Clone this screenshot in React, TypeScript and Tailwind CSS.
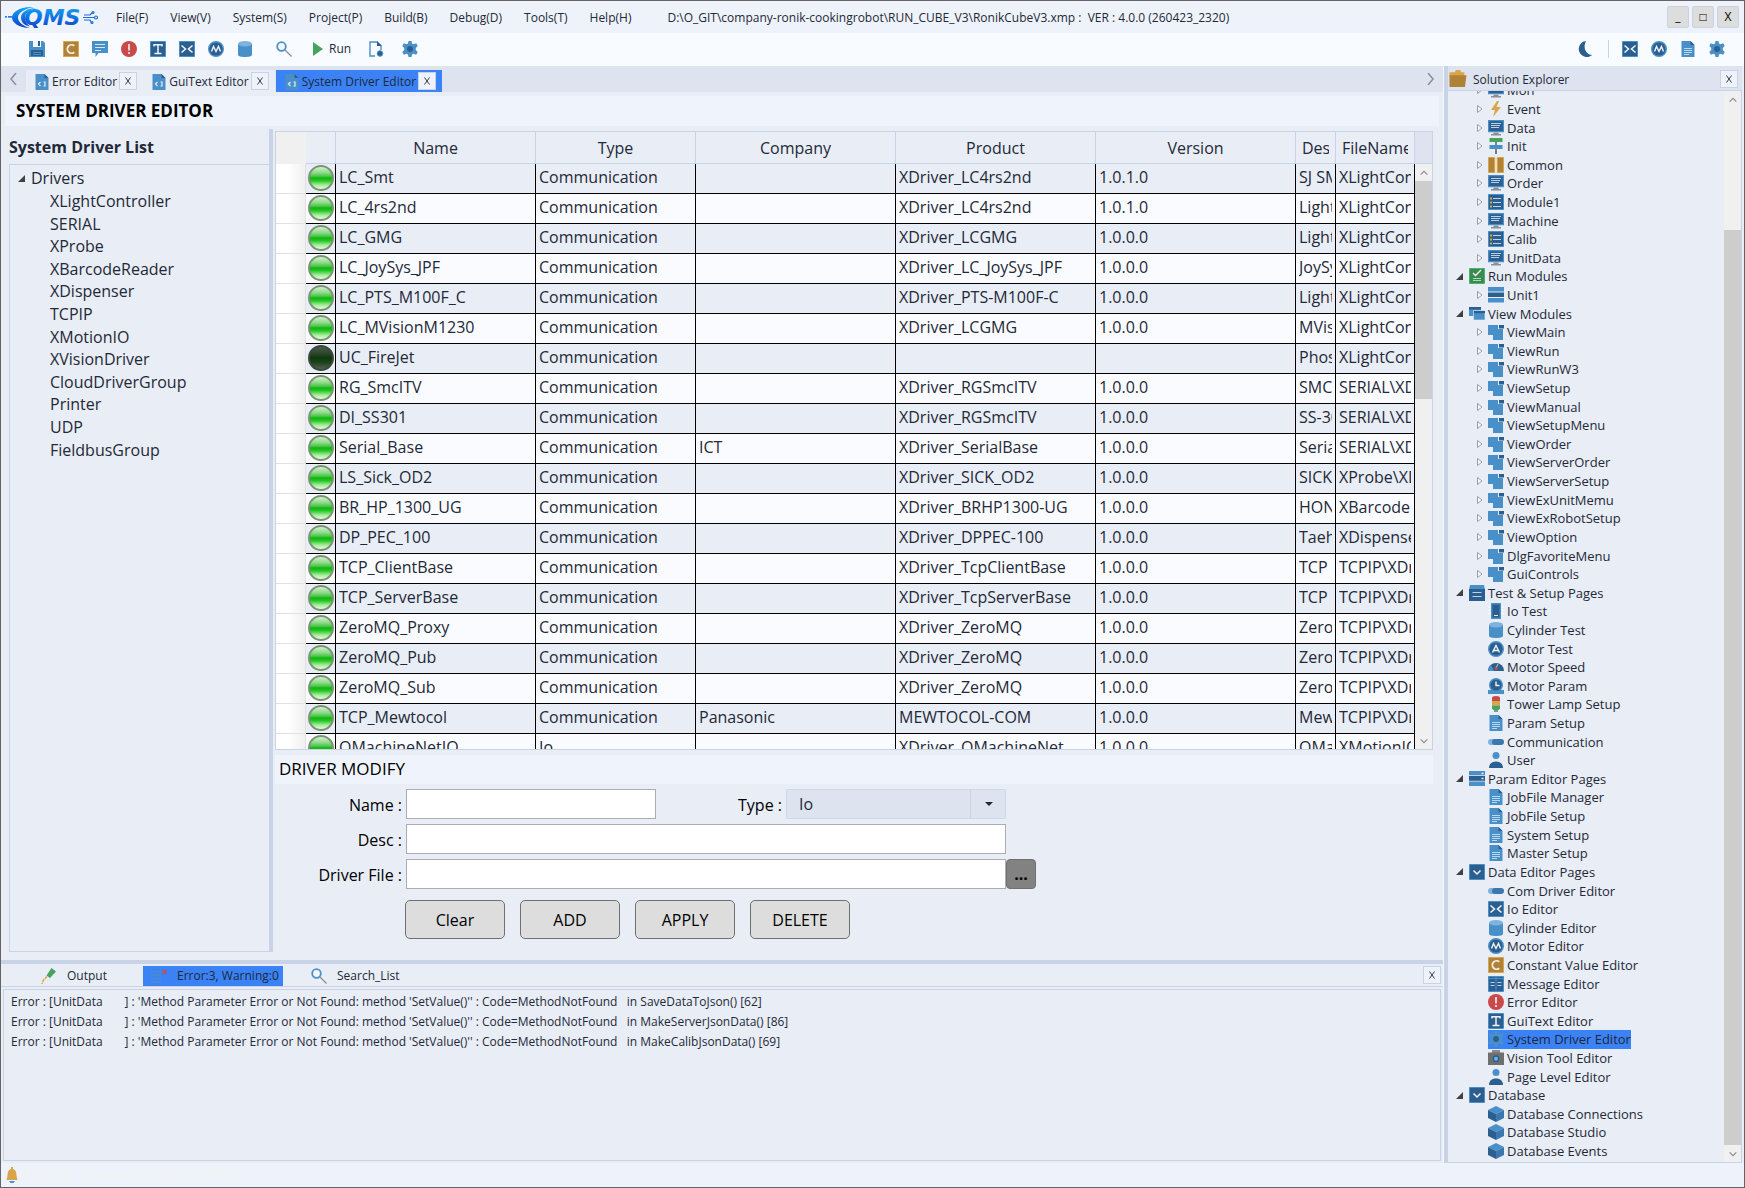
import clsx from "clsx";
import type { ReactNode } from "react";

const BLUE = "#4a90c8";
const NAVY = "#2c5f8f";
const GOLD = "#d9a54a";
const BROWN = "#b08238";
const PALE = "#e8edf6";

const icons = {
  save: (
    <>
      <path fill={BLUE} d="M0 0h14l2 2v14H0z" />
      <path fill="#f4f8fd" d="M4 0h8v6H4z" />
      <path fill={NAVY} d="M9 0h2v5H9zM2 9h12v6H2z" />
      <path stroke={BLUE} d="M4 11.5h8M4 13.5h8" />
    </>
  ),
  constant: (
    <>
      <path fill={BROWN} stroke={GOLD} d="M.5.5h15v15H.5z" />
      <path
        fill="none"
        stroke="#f4f0e8"
        strokeWidth="1.8"
        d="M11.3 4.8A4.2 4.2 0 1 0 11.3 11.2"
      />
    </>
  ),
  message: (
    <>
      <path fill={BLUE} d="M0 0h16v12H6.500l-3 4v-4H0z" />
      <path stroke="#d6e6f4" d="M3 3.500h10M3 6.500h10M3 9.500h6" />
    </>
  ),
  error: (
    <>
      <circle cx="8" cy="8" r="8" fill="#c94a4a" />
      <path stroke="#f3dede" strokeWidth="1.8" d="M8 3v6.500M8 11v2" />
    </>
  ),
  text: (
    <>
      <path fill={NAVY} stroke={BLUE} d="M.5.5h15v15H.5z" />
      <path
        fill="none"
        stroke="#f0f4fa"
        strokeWidth="1.5"
        d="M4 5.500V3.800h8v1.700M8 3.800v8.500M4.500 12.500h7"
      />
    </>
  ),
  io: (
    <>
      <path fill={NAVY} stroke={BLUE} d="M.5.5h15v15H.5z" />
      <path
        fill="none"
        stroke="#f0f4fa"
        strokeWidth="1.5"
        d="M2.500 4.500 6.500 8l-4 3.500M13.500 4.500 9.500 8l4 3.500"
      />
    </>
  ),
  motor: (
    <>
      <circle cx="8" cy="8" r="7.300" fill={NAVY} stroke={BLUE} strokeWidth="1.4" />
      <path
        fill="none"
        stroke="#f0f4fa"
        strokeWidth="1.4"
        d="M3.500 10.500 5.500 5.500 8 10.500 10.500 5.500 12.500 10.500"
      />
    </>
  ),
  cylinder: (
    <>
      <path fill={BLUE} d="M1 3v11c0 1 3 2 7 2s7-1 7-2V3z" />
      <ellipse cx="8" cy="2.800" rx="7" ry="2.800" fill="#7fb2df" />
    </>
  ),
  search: (
    <>
      <circle cx="5.500" cy="5.500" r="4.300" fill="#f4f8fd" stroke={BLUE} strokeWidth="1.8" />
      <path stroke="#8a8f96" strokeWidth="1.3" d="m9 9 6.500 6.500" />
    </>
  ),
  run: <path fill="#45a35c" d="M3 1 13 8 3 15z" />,
  docGear: (
    <>
      <path fill="none" stroke={BLUE} strokeWidth="1.4" d="M7 15H2V1h7l4 4v4" />
      <path fill={NAVY} d="M9 0v5h5z" />
      <circle cx="12" cy="12.500" r="2.800" fill={NAVY} stroke={BLUE} />
    </>
  ),
  gear: (
    <>
      <path
        fill={BLUE}
        d="M6.500 0h3l.5 2.500 1.500.8 2.700-1 1.500 2.700L13.800 7v2l1.900 2-1.500 2.700-2.700-1-1.500.8-.5 2.500h-3L6 13.500l-1.500-.8-2.700 1L.3 11l1.900-2V7L.3 5l1.500-2.700 2.700 1L6 2.500z"
      />
      <circle cx="8" cy="8" r="3" fill={NAVY} />
    </>
  ),
  moon: (
    <>
      <path fill={BLUE} d="M7 0a8 8 0 1 0 8 14.500C8 15 4 8 7 0z" />
      <path fill={NAVY} d="M9 0a8 8 0 1 0 6 14C9 13.500 5.500 7 9 0z" />
    </>
  ),
  doc: (
    <>
      <path fill={BLUE} d="M1.500 0h9L14.500 4v12h-13z" />
      <path fill={NAVY} d="M10.500 0v4h4z" />
      <path stroke="#bcd6ee" d="M4 7.500h8M4 9.500h8M4 11.500h8M4 13.500h5" />
    </>
  ),
  codeDoc: (
    <>
      <path fill={BLUE} d="M1.500 0h9L14.500 4v12h-13z" />
      <path fill={NAVY} d="M10.500 0v4h4z" />
      <path
        fill="none"
        stroke="#e4eef8"
        strokeWidth="1.2"
        d="M6.500 8 4.500 10l2 2M9.500 8h1.500v4H9.500"
      />
    </>
  ),
  folder: (
    <>
      <path fill={GOLD} d="M0 2h5l1-2h4l1 2h3v5H0z" />
      <path fill={BROWN} d="M0 5h16l-1.500 11H0z" />
    </>
  ),
  monitor: (
    <>
      <path fill={NAVY} stroke={BLUE} strokeWidth="1.2" d="M.6.600h14.800v11H.6z" />
      <path stroke="#b9d2ea" d="M3 3.500h10M3 5.500h9M3 7.500h8" />
      <path fill="#8a8f96" d="M5.500 12.500h5V14h-5zM3 14h10v1.500H3z" />
    </>
  ),
  bolt: <path fill={GOLD} d="M9 0 3 9h4l-2 7 8-10H8.500L11 0z" />,
  init: (
    <>
      <path fill="#7b8086" d="M7 4h2v12H7z" />
      <path fill="#45a35c" d="M1.500 0h13v4h-13z" />
      <path fill={BLUE} d="M1.500 7h13v4h-13z" />
    </>
  ),
  common: (
    <>
      <path fill={BROWN} stroke={GOLD} d="M.5.500h6.200v15H.5zM9.300.500h6.200v15H9.300z" />
      <path fill={GOLD} d="M6 4h4v8H6z" />
      <path fill="#f1dfb9" d="M7 4h2v8H7z" />
    </>
  ),
  module: (
    <>
      <path fill={NAVY} stroke={BLUE} d="M.5.5h15v15H.5z" />
      <path stroke="#b9d2ea" d="M5 4.500h8M5 8.500h8M5 12.500h8" />
      <path stroke={GOLD} strokeWidth="2" d="M2 4.500h2M2 8.500h2M2 12.500h2" />
    </>
  ),
  runModules: (
    <>
      <path fill="#3b8a50" stroke="#4db068" d="M.5.5h15v15H.5z" />
      <path fill="none" stroke="#f0f7f2" strokeWidth="1.4" d="m4 5 2.500 2.500L12 2" />
      <path stroke="#a9d6b6" d="M4 10.500h8M4 12.500h8" />
    </>
  ),
  unit: (
    <>
      <path fill={BLUE} d="M0 0h16v4.500H0zM0 11h16v4.500H0z" />
      <path fill={NAVY} d="M0 5.500h16v4.500H0z" />
    </>
  ),
  viewModules: (
    <>
      <path fill={BLUE} d="M0 1h12v9H0z" />
      <path fill={NAVY} d="M0 1h12v2.500H0z" />
      <path fill={BLUE} stroke={PALE} strokeWidth=".6" d="M4.500 4.500H16V14H4.500z" />
      <path fill={NAVY} d="M5 5h11v2.200H5z" />
    </>
  ),
  view: (
    <>
      <path fill={BLUE} d="M0 1h10v4h5v11H5v-5H0z" />
      <path fill={NAVY} d="M11 1h5v3.500h-5z" />
    </>
  ),
  testPages: (
    <>
      <path fill={BLUE} d="M1 0h14l1 5H0z" />
      <path fill={NAVY} d="M0 4h16v12H0z" />
      <path stroke="#b9d2ea" d="M3.500 7.500h9M3.500 11.500h9" />
    </>
  ),
  ioTest: (
    <>
      <path stroke="#f7fafd" d="M0 4.500h16M0 7.500h16M0 10.500h16" />
      <path fill={NAVY} stroke={BLUE} strokeWidth="1.4" d="M3.700.700h8.600v14.600H3.700z" />
      <path stroke="#dbe7f3" d="M6 12.500h4" />
    </>
  ),
  motorTest: (
    <>
      <circle cx="8" cy="8" r="7.300" fill={NAVY} stroke={BLUE} strokeWidth="1.4" />
      <path fill="none" stroke="#f0f4fa" strokeWidth="1.4" d="M4.500 11.500 8 4.500l3.500 7M6 9.500h4" />
    </>
  ),
  speed: (
    <>
      <path fill={NAVY} d="M0 12a8 8 0 0 1 16 0z" />
      <path fill={BLUE} d="M0 12a8 8 0 0 1 3-6l3 6z" />
      <path stroke="#e8c0c0" d="m8 9 2-4" />
      <circle cx="8" cy="9.500" r="1.500" fill="#c94a4a" />
    </>
  ),
  motorParam: (
    <>
      <path fill={BLUE} d="M0 12h16v4H0z" />
      <circle cx="8" cy="7" r="6.300" fill={NAVY} stroke={BLUE} strokeWidth="1.4" />
      <path fill="none" stroke="#f0f4fa" strokeWidth="1.4" d="M8 3.500V7.500h3.500" />
    </>
  ),
  lamp: (
    <>
      <path fill="#c94a4a" d="M4 2q0-2 4-2t4 2v3H4z" />
      <path fill={GOLD} d="M4 5h8v4.500H4z" />
      <path fill="#45a35c" d="M4 9.500h8v3L10.500 14h-5L4 12.500z" />
      <path fill="#8a8f96" d="M6 14h4v2H6z" />
    </>
  ),
  comm: (
    <>
      <rect x="0" y="5" width="12" height="6" rx="3" fill="#7fb2df" />
      <rect x="4" y="5" width="12" height="6" rx="3" fill="#3c78b0" />
    </>
  ),
  user: (
    <>
      <circle cx="8" cy="3.500" r="3.500" fill={BLUE} />
      <path fill={NAVY} d="M1 16c0-4 2.500-6.500 7-6.500s7 2.500 7 6.500z" />
    </>
  ),
  paramPages: (
    <>
      <path fill={BLUE} d="M0 0h16v4H0zM0 10.500h16V15H0z" />
      <path fill={NAVY} d="M0 4.800h16v5H0z" />
      <path stroke="#f0f4fa" strokeWidth="1.300" d="M12.500 2.500h2M12.500 7.500h2" />
    </>
  ),
  dataPages: (
    <>
      <path fill={NAVY} stroke={BLUE} d="M.5.5h15v15H.5z" />
      <path fill="none" stroke="#f0f4fa" strokeWidth="1.500" d="M4.500 6.500 8 10l3.500-3.500" />
    </>
  ),
  messageTable: (
    <>
      <path fill={NAVY} stroke={BLUE} d="M.5.500h15v15H.5z" />
      <path stroke={BLUE} d="M8 .5v15M.5 2.500h15" />
      <path stroke="#b9d2ea" d="M2.500 6.500h4M9.500 6.500h4M2.500 9.500h4M9.500 9.500h4" />
    </>
  ),
  camera: (
    <>
      <path fill="#8a8a8a" d="M4 0h8v3H4z" />
      <path fill="#6f6f6f" d="M0 2.500h16V15H0z" />
      <circle cx="8" cy="8.800" r="3.500" fill={NAVY} />
      <circle cx="8" cy="8.800" r="2" fill="#6fb0e8" />
    </>
  ),
  cube: (
    <>
      <path fill={BLUE} d="m8 0 8 4-8 4-8-4z" />
      <path fill={NAVY} d="m0 4 8 4v8l-8-4z" />
      <path fill="#3c78b0" d="m16 4-8 4v8l8-4z" />
    </>
  ),
  output: (
    <>
      <path fill="#45a35c" d="m10.500 0 4.500 3.500L9 10 5.500 7.500z" />
      <path fill="none" stroke={GOLD} strokeWidth="1.500" strokeDasharray="3 1" d="M6 8.500 2.500 12 1 16" />
    </>
  ),
  errorList: (
    <>
      <path stroke={BLUE} strokeOpacity=".7" strokeWidth="1.800" d="M0 3.500h10M0 7h10M0 10.500h10M0 14h10" />
      <path stroke="#c94a4a" strokeWidth="1.300" d="m11.500 2 4 4m0-4-4 4" />
    </>
  ),
  bell: (
    <>
      <path fill={GOLD} d="M7 0h2v2c3 1 3.500 4 3.500 7l1 4h-11l1-4c0-3 .5-6 3.500-7z" />
      <path fill={BLUE} d="M5 14h6l-1.500 2h-3z" />
    </>
  ),
} satisfies Record<string, ReactNode>;

type IconName = keyof typeof icons;

function Icon({ name, className }: { name: IconName; className?: string }) {
  return (
    <svg viewBox="0 0 16 16" aria-hidden className={clsx("shrink-0", className ?? "size-4")}>
      {icons[name]}
    </svg>
  );
}

const MENU = [
  "File(F)",
  "View(V)",
  "System(S)",
  "Project(P)",
  "Build(B)",
  "Debug(D)",
  "Tools(T)",
  "Help(H)",
];

const TOOLS: IconName[] = [
  "constant",
  "message",
  "error",
  "text",
  "io",
  "motor",
  "cylinder",
];

const DRIVERS = [
  "XLightController",
  "SERIAL",
  "XProbe",
  "XBarcodeReader",
  "XDispenser",
  "TCPIP",
  "XMotionIO",
  "XVisionDriver",
  "CloudDriverGroup",
  "Printer",
  "UDP",
  "FieldbusGroup",
];

// name, type, company, product, version, description, file name
const ROWS = [
  ["LC_Smt", "Communication", "", "XDriver_LC4rs2nd", "1.0.1.0", "SJ SMT", "XLightController"],
  ["LC_4rs2nd", "Communication", "", "XDriver_LC4rs2nd", "1.0.1.0", "Light", "XLightController"],
  ["LC_GMG", "Communication", "", "XDriver_LCGMG", "1.0.0.0", "Light", "XLightController"],
  ["LC_JoySys_JPF", "Communication", "", "XDriver_LC_JoySys_JPF", "1.0.0.0", "JoySys", "XLightController"],
  ["LC_PTS_M100F_C", "Communication", "", "XDriver_PTS-M100F-C", "1.0.0.0", "Light", "XLightController"],
  ["LC_MVisionM1230", "Communication", "", "XDriver_LCGMG", "1.0.0.0", "MVision", "XLightController"],
  ["UC_FireJet", "Communication", "", "", "", "Phos", "XLightController"],
  ["RG_SmcITV", "Communication", "", "XDriver_RGSmcITV", "1.0.0.0", "SMC", "SERIAL\\XDriver"],
  ["DI_SS301", "Communication", "", "XDriver_RGSmcITV", "1.0.0.0", "SS-301", "SERIAL\\XDriver"],
  ["Serial_Base", "Communication", "ICT", "XDriver_SerialBase", "1.0.0.0", "Serial", "SERIAL\\XDriver"],
  ["LS_Sick_OD2", "Communication", "", "XDriver_SICK_OD2", "1.0.0.0", "SICK", "XProbe\\XDriver"],
  ["BR_HP_1300_UG", "Communication", "", "XDriver_BRHP1300-UG", "1.0.0.0", "HON", "XBarcodeReader"],
  ["DP_PEC_100", "Communication", "", "XDriver_DPPEC-100", "1.0.0.0", "Taeh", "XDispenser"],
  ["TCP_ClientBase", "Communication", "", "XDriver_TcpClientBase", "1.0.0.0", "TCP", "TCPIP\\XDriver"],
  ["TCP_ServerBase", "Communication", "", "XDriver_TcpServerBase", "1.0.0.0", "TCP", "TCPIP\\XDriver"],
  ["ZeroMQ_Proxy", "Communication", "", "XDriver_ZeroMQ", "1.0.0.0", "Zero", "TCPIP\\XDriver"],
  ["ZeroMQ_Pub", "Communication", "", "XDriver_ZeroMQ", "1.0.0.0", "Zero", "TCPIP\\XDriver"],
  ["ZeroMQ_Sub", "Communication", "", "XDriver_ZeroMQ", "1.0.0.0", "Zero", "TCPIP\\XDriver"],
  ["TCP_Mewtocol", "Communication", "Panasonic", "MEWTOCOL-COM", "1.0.0.0", "Mew", "TCPIP\\XDriver"],
  ["QMachineNetIO", "Io", "", "XDriver_QMachineNet", "1.0.0.0", "QMac", "XMotionIO"],
];

type Node = { icon: IconName; label: string; kind: "group" | "branch" | "leaf" };

const group = (icon: IconName, label: string): Node => ({ icon, label, kind: "group" });
const branch = (icon: IconName, label: string): Node => ({ icon, label, kind: "branch" });
const leaf = (icon: IconName, label: string): Node => ({ icon, label, kind: "leaf" });

const SOLUTION: Node[] = [
  branch("monitor", "Mon"),
  branch("bolt", "Event"),
  branch("monitor", "Data"),
  branch("init", "Init"),
  branch("common", "Common"),
  branch("monitor", "Order"),
  branch("module", "Module1"),
  branch("monitor", "Machine"),
  branch("module", "Calib"),
  branch("monitor", "UnitData"),
  group("runModules", "Run Modules"),
  branch("unit", "Unit1"),
  group("viewModules", "View Modules"),
  branch("view", "ViewMain"),
  branch("view", "ViewRun"),
  branch("view", "ViewRunW3"),
  branch("view", "ViewSetup"),
  branch("view", "ViewManual"),
  branch("view", "ViewSetupMenu"),
  branch("view", "ViewOrder"),
  branch("view", "ViewServerOrder"),
  branch("view", "ViewServerSetup"),
  branch("view", "ViewExUnitMemu"),
  branch("view", "ViewExRobotSetup"),
  branch("view", "ViewOption"),
  branch("view", "DlgFavoriteMenu"),
  branch("view", "GuiControls"),
  group("testPages", "Test & Setup Pages"),
  leaf("ioTest", "Io Test"),
  leaf("cylinder", "Cylinder Test"),
  leaf("motorTest", "Motor Test"),
  leaf("speed", "Motor Speed"),
  leaf("motorParam", "Motor Param"),
  leaf("lamp", "Tower Lamp Setup"),
  leaf("doc", "Param Setup"),
  leaf("comm", "Communication"),
  leaf("user", "User"),
  group("paramPages", "Param Editor Pages"),
  leaf("doc", "JobFile Manager"),
  leaf("doc", "JobFile Setup"),
  leaf("doc", "System Setup"),
  leaf("doc", "Master Setup"),
  group("dataPages", "Data Editor Pages"),
  leaf("comm", "Com Driver Editor"),
  leaf("io", "Io Editor"),
  leaf("cylinder", "Cylinder Editor"),
  leaf("motor", "Motor Editor"),
  leaf("constant", "Constant Value Editor"),
  leaf("messageTable", "Message Editor"),
  leaf("error", "Error Editor"),
  leaf("text", "GuiText Editor"),
  leaf("gear", "System Driver Editor"),
  leaf("camera", "Vision Tool Editor"),
  leaf("user", "Page Level Editor"),
  group("dataPages", "Database"),
  leaf("cube", "Database Connections"),
  leaf("cube", "Database Studio"),
  leaf("cube", "Database Events"),
];

const LOGS = [
  "in SaveDataToJson() [62]",
  "in MakeServerJsonData() [86]",
  "in MakeCalibJsonData() [69]",
];

export default function App() {
  return (
    <div className="flex h-screen flex-col overflow-hidden border border-[#646464] bg-[#e8edf6] font-['Open_Sans','Noto_Sans',sans-serif] text-xs text-[#1f2937]">
      <MenuBar />
      <Toolbar />
      <div className="flex min-h-0 flex-1">
        <div className="flex min-w-0 flex-1 flex-col border-r border-[#f4f7fc]">
          <EditorTabs />
          <SystemDriverEditor />
          <OutputPanel />
        </div>
        <SolutionExplorer />
      </div>
      <footer className="flex h-6 shrink-0 items-center gap-1 bg-[#eef3fb] pl-[3px]">
        <Icon name="bell" />
        <span className="text-[#f2f2f2]">LICENSE : License[ICT-2235-XXX-M99]</span>
      </footer>
    </div>
  );
}

function Logo() {
  return (
    <svg viewBox="0 0 96 24" className="h-6 w-24 shrink-0" role="img" aria-label="QMS">
      <defs>
        <linearGradient id="logo" x1="0" y1="0" x2="0" y2="1">
          <stop offset="0" stopColor="#12a8f5" />
          <stop offset="0.600" stopColor="#1268e0" />
          <stop offset="1" stopColor="#0a3fc0" />
        </linearGradient>
      </defs>
      <g fill="url(#logo)">
        <path d="M29 2C15 1 7 7 7 12.500s7 10 18 10.500c-7-2-12-6-12-10.500S19 4 29 2z" />
        <path d="M31 3c-8 0-15 4-15 9.500s4 8 9 9c-3-2-5-5-5-9s4-8 11-9.500z" />
        <path d="M0 11h2v1.500H0zM3 11h4v1.500H3z" />
        <text
          x="19"
          y="20"
          fontFamily="DejaVu Sans, sans-serif"
          fontSize="22"
          fontWeight="bold"
          fontStyle="italic"
        >
          QMS
        </text>
      </g>
      <g fill="none" stroke="#1a6be0" strokeWidth="1.200">
        <path d="M79 10h6l2-2M78 12.500h11M79 15h6l1 2" />
        <circle cx="91" cy="12.500" r="1.500" />
        <circle cx="88" cy="7.500" r="1" />
        <circle cx="87" cy="17.500" r="1" />
      </g>
    </svg>
  );
}

function MenuBar() {
  return (
    <header className="flex h-8 shrink-0 items-center bg-[#eef3fb] pr-[5px] pl-1">
      <Logo />
      <nav className="flex gap-[22px] pt-0.5 pl-[15px] whitespace-nowrap">
        {MENU.map((item) => (
          <button key={item}>{item}</button>
        ))}
      </nav>
      <div className="flex-1 truncate pt-0.5 pl-9">
        D:\O_GIT\company-ronik-cookingrobot\RUN_CUBE_V3\RonikCubeV3.xmp :&nbsp; VER : 4.0.0
        (260423_2320)
      </div>
      <div className="flex gap-[3px]">
        {["_", "□", "X"].map((label) => (
          <button
            key={label}
            className="size-[22px] rounded-xs border border-[#c8d3e6] bg-[#dddddd] leading-4 text-black"
          >
            {label}
          </button>
        ))}
      </div>
    </header>
  );
}

function Toolbar() {
  return (
    <div className="flex h-[33px] shrink-0 items-center bg-[#f8fbff] pr-[19px] pb-px pl-7">
      <button aria-label="Save">
        <Icon name="save" />
      </button>
      <div className="flex gap-[13px] pl-[18px]">
        {TOOLS.map((name) => (
          <button key={name} aria-label={name}>
            <Icon name={name} />
          </button>
        ))}
      </div>
      <button aria-label="Search" className="pl-[23px]">
        <Icon name="search" />
      </button>
      <button className="flex items-center gap-[3px] pl-[18px]">
        <Icon name="run" />
        Run
      </button>
      <button aria-label="New document" className="pl-[17px]">
        <Icon name="docGear" />
      </button>
      <button aria-label="Settings" className="pl-[18px]">
        <Icon name="gear" />
      </button>
      <div className="ml-auto flex items-center gap-[13px]">
        <Icon name="moon" className="mr-0.5 size-4" />
        <div className="h-[18px] w-px bg-[#cbd3e0]" />
        <Icon name="io" />
        <Icon name="motor" />
        <Icon name="doc" />
        <Icon name="gear" />
      </div>
    </div>
  );
}

function Chevron({ d, className }: { d: string; className?: string }) {
  return (
    <svg viewBox="0 0 12 12" aria-hidden className={clsx("shrink-0", className ?? "size-3")}>
      <path d={d} fill="none" stroke="#8a8f96" strokeWidth="1.500" />
    </svg>
  );
}

function CloseButton({ className }: { className?: string }) {
  return (
    <button
      aria-label="Close"
      className={clsx(
        "flex size-[18px] shrink-0 items-center justify-center border border-[#c8d3e6] bg-[#eef3fb]",
        className,
      )}
    >
      <svg viewBox="0 0 8 8" className="size-2">
        <path d="m1.500.5 5 7m0-7-5 7" stroke="#333b47" />
      </svg>
    </button>
  );
}

function EditorTabs() {
  return (
    <div className="flex h-[26px] shrink-0 items-end bg-[#dde4f0]">
      <button aria-label="Previous tab" className="flex w-[25px] justify-center self-center">
        <Chevron d="M8 0 3 6l5 6" />
      </button>
      {["Error Editor", "GuiText Editor", "System Driver Editor"].map((tab, i) => (
        <div
          key={tab}
          className={clsx(
            "flex h-[22px] items-center pr-1.5 pl-2",
            i === 2 ? "ml-px bg-[#3b82f6]" : "bg-[#e8edf6]",
          )}
        >
          <button className="flex items-center gap-0.5 pt-px whitespace-nowrap">
            <Icon name="codeDoc" />
            {tab}
          </button>
          <CloseButton className="ml-0.5" />
        </div>
      ))}
      <button aria-label="Next tab" className="mr-[7px] ml-auto self-center">
        <Chevron d="M4 0l5 6-5 6" />
      </button>
    </div>
  );
}

function SystemDriverEditor() {
  return (
    <main className="flex min-h-0 flex-1 flex-col px-1 pt-1 pb-2 text-base">
      <h1 className="h-[30px] shrink-0 bg-[#eff4fc] pl-[11px] text-[17px] leading-[30px] font-bold text-black">
        SYSTEM DRIVER EDITOR
      </h1>
      <div className="flex min-h-0 flex-1 pt-[3px]">
        <section className="flex w-[268px] shrink-0 flex-col border-r-4 border-[#c8d3e6] pl-1">
          <h2 className="h-[35px] shrink-0 leading-9 font-bold">System Driver List</h2>
          <DriverTree />
        </section>
        <section className="flex min-w-0 flex-1 flex-col pr-1.5 pl-0.5">
          <DriverTable />
          <DriverForm />
        </section>
      </div>
    </main>
  );
}

function DriverTree() {
  return (
    <div className="flex-1 border border-r-0 border-[#c8d3e6] px-2 pt-0.5">
      <ul className="grid h-[294px] auto-rows-fr items-center">
        <li className="flex items-center gap-1.5">
          <OpenMark />
          Drivers
        </li>
        {DRIVERS.map((driver) => (
          <li key={driver} className="pl-8">
            {driver}
          </li>
        ))}
      </ul>
    </div>
  );
}

function OpenMark() {
  return (
    <svg viewBox="0 0 7 7" aria-hidden className="size-[7px] shrink-0">
      <path d="M7 0v7H0z" fill="#404040" />
    </svg>
  );
}

const HEADINGS = ["Name", "Type", "Company", "Product", "Version", "Des", "FileName"];

function DriverTable() {
  return (
    <div className="mt-0.5 flex min-h-0 flex-1 border border-[#c8d3e6]">
      <div className="min-w-0 flex-1 overflow-hidden">
        <table className="w-full table-fixed border-separate border-spacing-0">
          <colgroup>
            <col className="w-[30px]" />
            <col className="w-[30px]" />
            <col className="w-[200px]" />
            <col className="w-[160px]" />
            <col className="w-[200px]" />
            <col className="w-[200px]" />
            <col className="w-[200px]" />
            <col className="w-[40px]" />
            <col />
          </colgroup>
          <thead>
            <tr className="h-8">
              <th className="bg-[#f0f0f0]" aria-label="Selector" />
              <th className="border-r border-b border-[#c8d3e6]" aria-label="Status" />
              {HEADINGS.map((heading) => (
                <th
                  key={heading}
                  className="border-r border-b border-[#c8d3e6] px-1.5 py-0 font-normal"
                >
                  <div className="overflow-hidden leading-6 whitespace-nowrap">{heading}</div>
                </th>
              ))}
            </tr>
          </thead>
          <tbody>
            {ROWS.map((row, i) => (
              <tr key={row[0]} className={clsx("h-[30px]", i % 2 ? "bg-[#fafbff]" : "bg-[#e8edf6]")}>
                <td className="border-r border-b border-[#e2e2e2] bg-linear-to-r from-white from-40% to-[#f0f0f0] p-0" />
                <td className="border-r border-b border-black p-0 pt-px align-top">
                  <StatusBall on={row[0] !== "UC_FireJet"} />
                </td>
                {row.map((cell, j) => (
                  <td key={HEADINGS[j]} className="border-r border-b border-black px-[3px] py-0 align-top">
                    <div className="h-[26px] overflow-hidden leading-[26px] whitespace-nowrap">
                      {cell}
                    </div>
                  </td>
                ))}
              </tr>
            ))}
          </tbody>
        </table>
      </div>
      <div className="flex w-[17px] shrink-0 flex-col">
        <div className="h-8 shrink-0 border-b border-[#c8d3e6] bg-[#dde4f0]" />
        <ScrollBar thumb="h-[218px] shrink-0" after="flex-1" />
      </div>
    </div>
  );
}

function ScrollBar({ before, thumb, after }: { before?: string; thumb: string; after?: string }) {
  return (
    <div className="flex flex-1 flex-col items-center bg-[#f0f0f0]">
      <div className="flex h-[17px] shrink-0 items-center">
        <Chevron d="M2 8l4-4 4 4" className="size-2.5" />
      </div>
      {before && <div className={before} />}
      <div className={clsx("w-full bg-[#cdcdcd]", thumb)} />
      {after && <div className={after} />}
      <div className="flex h-[17px] shrink-0 items-center">
        <Chevron d="M2 4l4 4 4-4" className="size-2.5" />
      </div>
    </div>
  );
}

function StatusBall({ on }: { on: boolean }) {
  return (
    <div
      className={clsx(
        "mx-auto size-[26px] rounded-full border-2",
        on
          ? "border-[#7c9474] bg-[linear-gradient(#d4efd0,#8fdc8c_25%,#4cc44a_42%,#0fb50f_50%,#22c822_62%,#a8eb9f_82%,#e4fbdc)]"
          : "border-[#3a4a3a] bg-[linear-gradient(#4a5a4a,#2c442c_30%,#0c3a0c_50%,#1c421c_70%,#50604e)]",
      )}
    />
  );
}

const INPUT = "h-[30px] border border-[#abadb3] bg-white px-1 outline-none";
const LABEL = "col-start-1 pt-0.5 pr-1 text-right";
const BUTTON =
  "h-[39px] w-[100px] rounded-[5px] border border-[#707070] bg-[#dddddd] text-center";

function DriverForm() {
  return (
    <form className="shrink-0 text-black" onSubmit={(e) => e.preventDefault()}>
      <h2 className="mt-[5px] h-[29px] bg-[#eff4fc] pl-1 text-[17px] leading-7">DRIVER MODIFY</h2>
      <div className="grid grid-cols-[131px_250px_130px_220px_30px] items-center gap-y-[5px] pt-[5px]">
        <label htmlFor="name" className={LABEL}>
          Name :
        </label>
        <input id="name" className={INPUT} />
        <label htmlFor="type" className="pt-0.5 pr-1 text-right">
          Type :
        </label>
        <div className="relative">
          <select
            id="type"
            className="h-[30px] w-full appearance-none rounded-xs border border-[#cdd9ea] bg-[#dde4f0] pl-3 text-[#1f2937]"
          >
            <option>Io</option>
          </select>
          <div className="pointer-events-none absolute inset-y-0 right-0 flex w-9 items-center justify-center border-l border-[#c8d3e6]">
            <svg viewBox="0 0 8 4" className="h-1 w-2">
              <path d="M0 0h8L4 4z" fill="#1f2937" />
            </svg>
          </div>
        </div>
        <label htmlFor="desc" className={LABEL}>
          Desc :
        </label>
        <input id="desc" className={clsx(INPUT, "col-span-3")} />
        <label htmlFor="file" className={LABEL}>
          Driver File :
        </label>
        <input id="file" className={clsx(INPUT, "col-span-3")} />
        <button
          aria-label="Browse"
          className="h-[30px] rounded-sm border border-[#707070] bg-[#828282] leading-7 font-bold"
        >
          ...
        </button>
      </div>
      <div className="flex gap-[15px] pt-[11px] pb-[13px] pl-[130px]">
        {["Clear", "ADD", "APPLY", "DELETE"].map((label) => (
          <button key={label} className={BUTTON}>
            {label}
          </button>
        ))}
      </div>
    </form>
  );
}

function OutputPanel() {
  return (
    <section className="flex h-[203px] shrink-0 flex-col border-t-4 border-[#c8d3e6]">
      <div className="flex h-[23px] shrink-0 items-end border-b border-[#c8d3e6] pr-0.5">
        <button className="flex h-5 w-[142px] items-center gap-2.5 pl-10">
          <Icon name="output" />
          Output
        </button>
        <button className="flex h-5 w-[140px] items-center gap-2.5 bg-[#3b82f6] pl-2 whitespace-nowrap">
          <Icon name="errorList" />
          Error:3, Warning:0
        </button>
        <button className="flex h-5 items-center gap-2.5 pl-7">
          <Icon name="search" />
          Search_List
        </button>
        <CloseButton className="mb-0.5 ml-auto" />
      </div>
      <div className="m-0.5 flex-1 border border-[#c8d3e6] px-[7px] pt-0.5">
        {LOGS.map((log) => (
          <p key={log} className="leading-5 whitespace-pre">
            {"Error : [UnitData       ] : 'Method Parameter Error or Not Found: method 'SetValue()'' : Code=MethodNotFound   " +
              log}
          </p>
        ))}
      </div>
    </section>
  );
}

function SolutionExplorer() {
  return (
    <aside className="flex w-[300px] shrink-0 flex-col border-l-4 border-[#c8d3e6] pr-0.5">
      <div className="flex h-[25px] shrink-0 items-center gap-1.5 border-b border-[#c8d3e6] bg-[#dde4f0] pt-px pr-1 pl-px">
        <Icon name="folder" className="h-[17px] w-[18px]" />
        <h2 className="pt-0.5">Solution Explorer</h2>
        <CloseButton className="ml-auto" />
      </div>
      <div className="flex min-h-0 flex-1 overflow-hidden border-r border-b border-[#c8d3e6]">
        <ul className="-mt-2.5 flex min-w-0 flex-1 flex-col pb-0.5 pl-2 text-[13px] leading-[18px]">
          {SOLUTION.map((node, i) => (
            <TreeRow key={i} node={node} />
          ))}
        </ul>
        <div className="flex w-[17px] shrink-0 flex-col">
          <ScrollBar before="h-[122px] shrink-0" thumb="flex-1" />
        </div>
      </div>
    </aside>
  );
}

function TreeRow({ node }: { node: Node }) {
  const active = node.label === "System Driver Editor";
  return (
    <li className={clsx("flex min-h-0 flex-1 items-center", node.kind !== "group" && "pl-[19px]")}>
      <span className="flex w-[13px] shrink-0 items-center">
        {node.kind === "group" && <OpenMark />}
        {node.kind === "branch" && (
          <svg viewBox="0 0 6 8" className="ml-0.5 h-2 w-1.5">
            <path d="M.5.500 5 4 .5 7.500z" fill="#f8fafd" stroke="#9a9fa6" />
          </svg>
        )}
      </span>
      <span
        className={clsx("flex h-full items-center gap-[3px] whitespace-nowrap", active && "bg-[#3b82f6]")}
      >
        <Icon name={node.icon} />
        {node.label}
      </span>
    </li>
  );
}
